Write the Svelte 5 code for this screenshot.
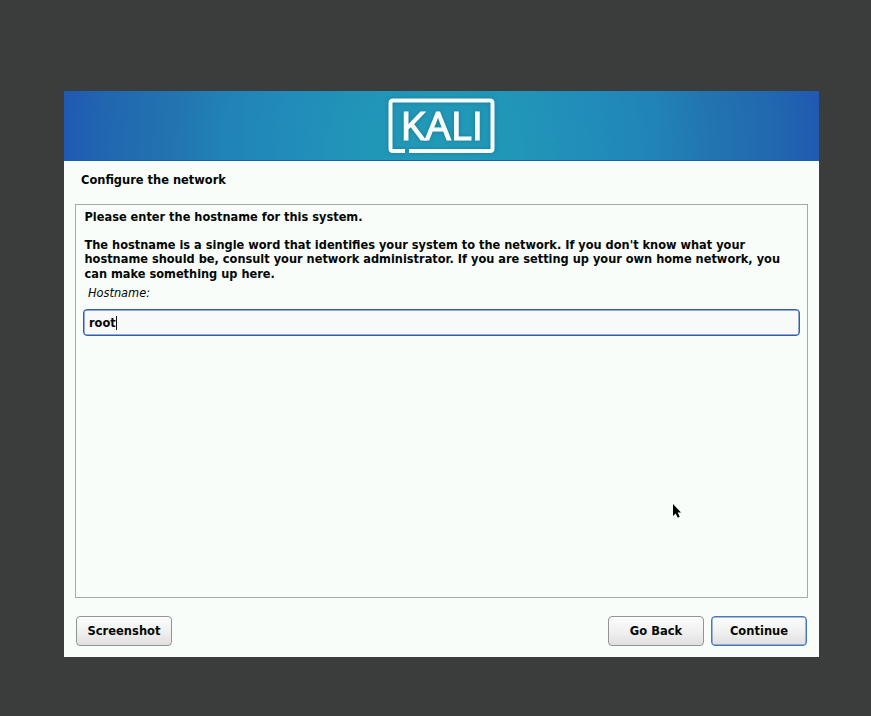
<script>
  let hostname = $state('root');
  const paragraph = [
    "The hostname is a single word that identifies your system to the network. If you don't know what your",
    'hostname should be, consult your network administrator. If you are setting up your own home network, you',
    'can make something up here.'
  ];
</script>

<main class="screen">
  <section class="installer">
    <header class="banner">
      <svg class="logo" width="115" height="66" viewBox="384 93 115 66" role="img" aria-label="KALI">
        <path d="M405 151H393Q390.5 151 390.5 148.5V103Q390.5 100.5 393 100.5H490Q492.5 100.5 492.5 103V148.5Q492.5 151 490 151H409" />
        <text x="400.5" y="139.5" textLength="82.5" lengthAdjust="spacingAndGlyphs">KALI</text>
      </svg>
    </header>
    <h1>Configure the network</h1>
    <div class="panel">
      <p>Please enter the hostname for this system.</p>
      <p class="details">{#each paragraph as line}<span>{line}</span>{/each}</p>
      <label for="hostname">Hostname:</label>
      <div class="field" id="hostname" role="textbox" tabindex="-1"><span>{hostname}</span><i class="caret"></i></div>
    </div>
    <footer>
      <button>Screenshot</button>
      <button class="back">Go Back</button>
      <button class="primary">Continue</button>
    </footer>
  </section>
  <svg class="cursor" width="10" height="16" viewBox="0 0 10 16">
    <path d="M1 1V13L3.6 10.4L5.8 14.8L7.7 13.8L5.6 9.6H9Z" />
  </svg>
</main>

<style>
  :global(body) { margin: 0; background: #3b3d3c; }
  * { box-sizing: border-box; }
  .screen {
    position: relative;
    height: 716px;
    padding: 91px 52px 0 64px;
    background: #3b3d3c;
    color: #050706;
    font: bold 11.38px/14px "DejaVu Sans", sans-serif;
    overflow: hidden;
  }
  .installer {
    display: flex;
    flex-direction: column;
    height: 566px;
    background: #f8fdf9;
  }
  .banner {
    display: flex;
    justify-content: center;
    height: 70px;
    flex: none;
    padding-top: 2px;
    background: radial-gradient(ellipse 395px 440px at 50% 90%, #219bb7 0%, #2196b8 20%, #2189ba 44%, #2182b7 56%, #2274b0 68%, #2167b0 85%, #2058b2 97%);
    border-bottom: 1px solid #1c5eae;
  }
  .logo path { fill: none; stroke: #f8fdfd; stroke-width: 4; }
  .logo { filter: drop-shadow(0 0 2px #14667d99); }
  .logo text { font: 400 37.5px "Open Sans", sans-serif; fill: #f8fdfd; stroke: #f8fdfd; stroke-width: 1.2; }
  h1 { flex: none; margin: 11px 0 0 17px; height: 32px; font: inherit; font-size: 11.45px; line-height: 16px; }
  .panel {
    height: 394px;
    flex: none;
    margin: 0 11px;
    padding: 5px 7px 0;
    border: 1px solid #a5aaa7;
  }
  p { margin: 0 0 0 1.5px; white-space: nowrap; }
  .details { margin-top: 14px; line-height: 14.3px; }
  .details span { display: block; }
  label { display: block; margin: 5px 0 0 5px; font-style: italic; font-weight: normal; }
  .field {
    display: flex;
    align-items: center;
    height: 27px;
    margin-top: 9px;
    margin-left: -.5px;
    padding: 1px 0 0 5.5px;
    border: 1.5px solid #315db3;
    box-shadow: inset 0 0 0 .5px #315db3;
    border-radius: 4px;
    background: #f8f9f9;
  }
  .caret { width: 1px; height: 14px; background: #111; }
  footer { display: flex; flex: none; margin: 18px 12px 0; gap: 7px; }
  button {
    width: 96px;
    height: 30px;
    padding: 0;
    border: 1px solid #929693;
    border-radius: 4px;
    background: linear-gradient(#fbfcfb, #f0f1f0 50%, #dedfde);
    color: inherit;
    font: inherit;
    font-size: 11.5px;
  }
  .back { margin-left: auto; }
  .primary { border-color: #4b77c0; box-shadow: inset 0 0 0 .5px #4b77c0; }
  .cursor { position: absolute; left: 672px; top: 503px; }
  .cursor path { fill: #050605; }
</style>
